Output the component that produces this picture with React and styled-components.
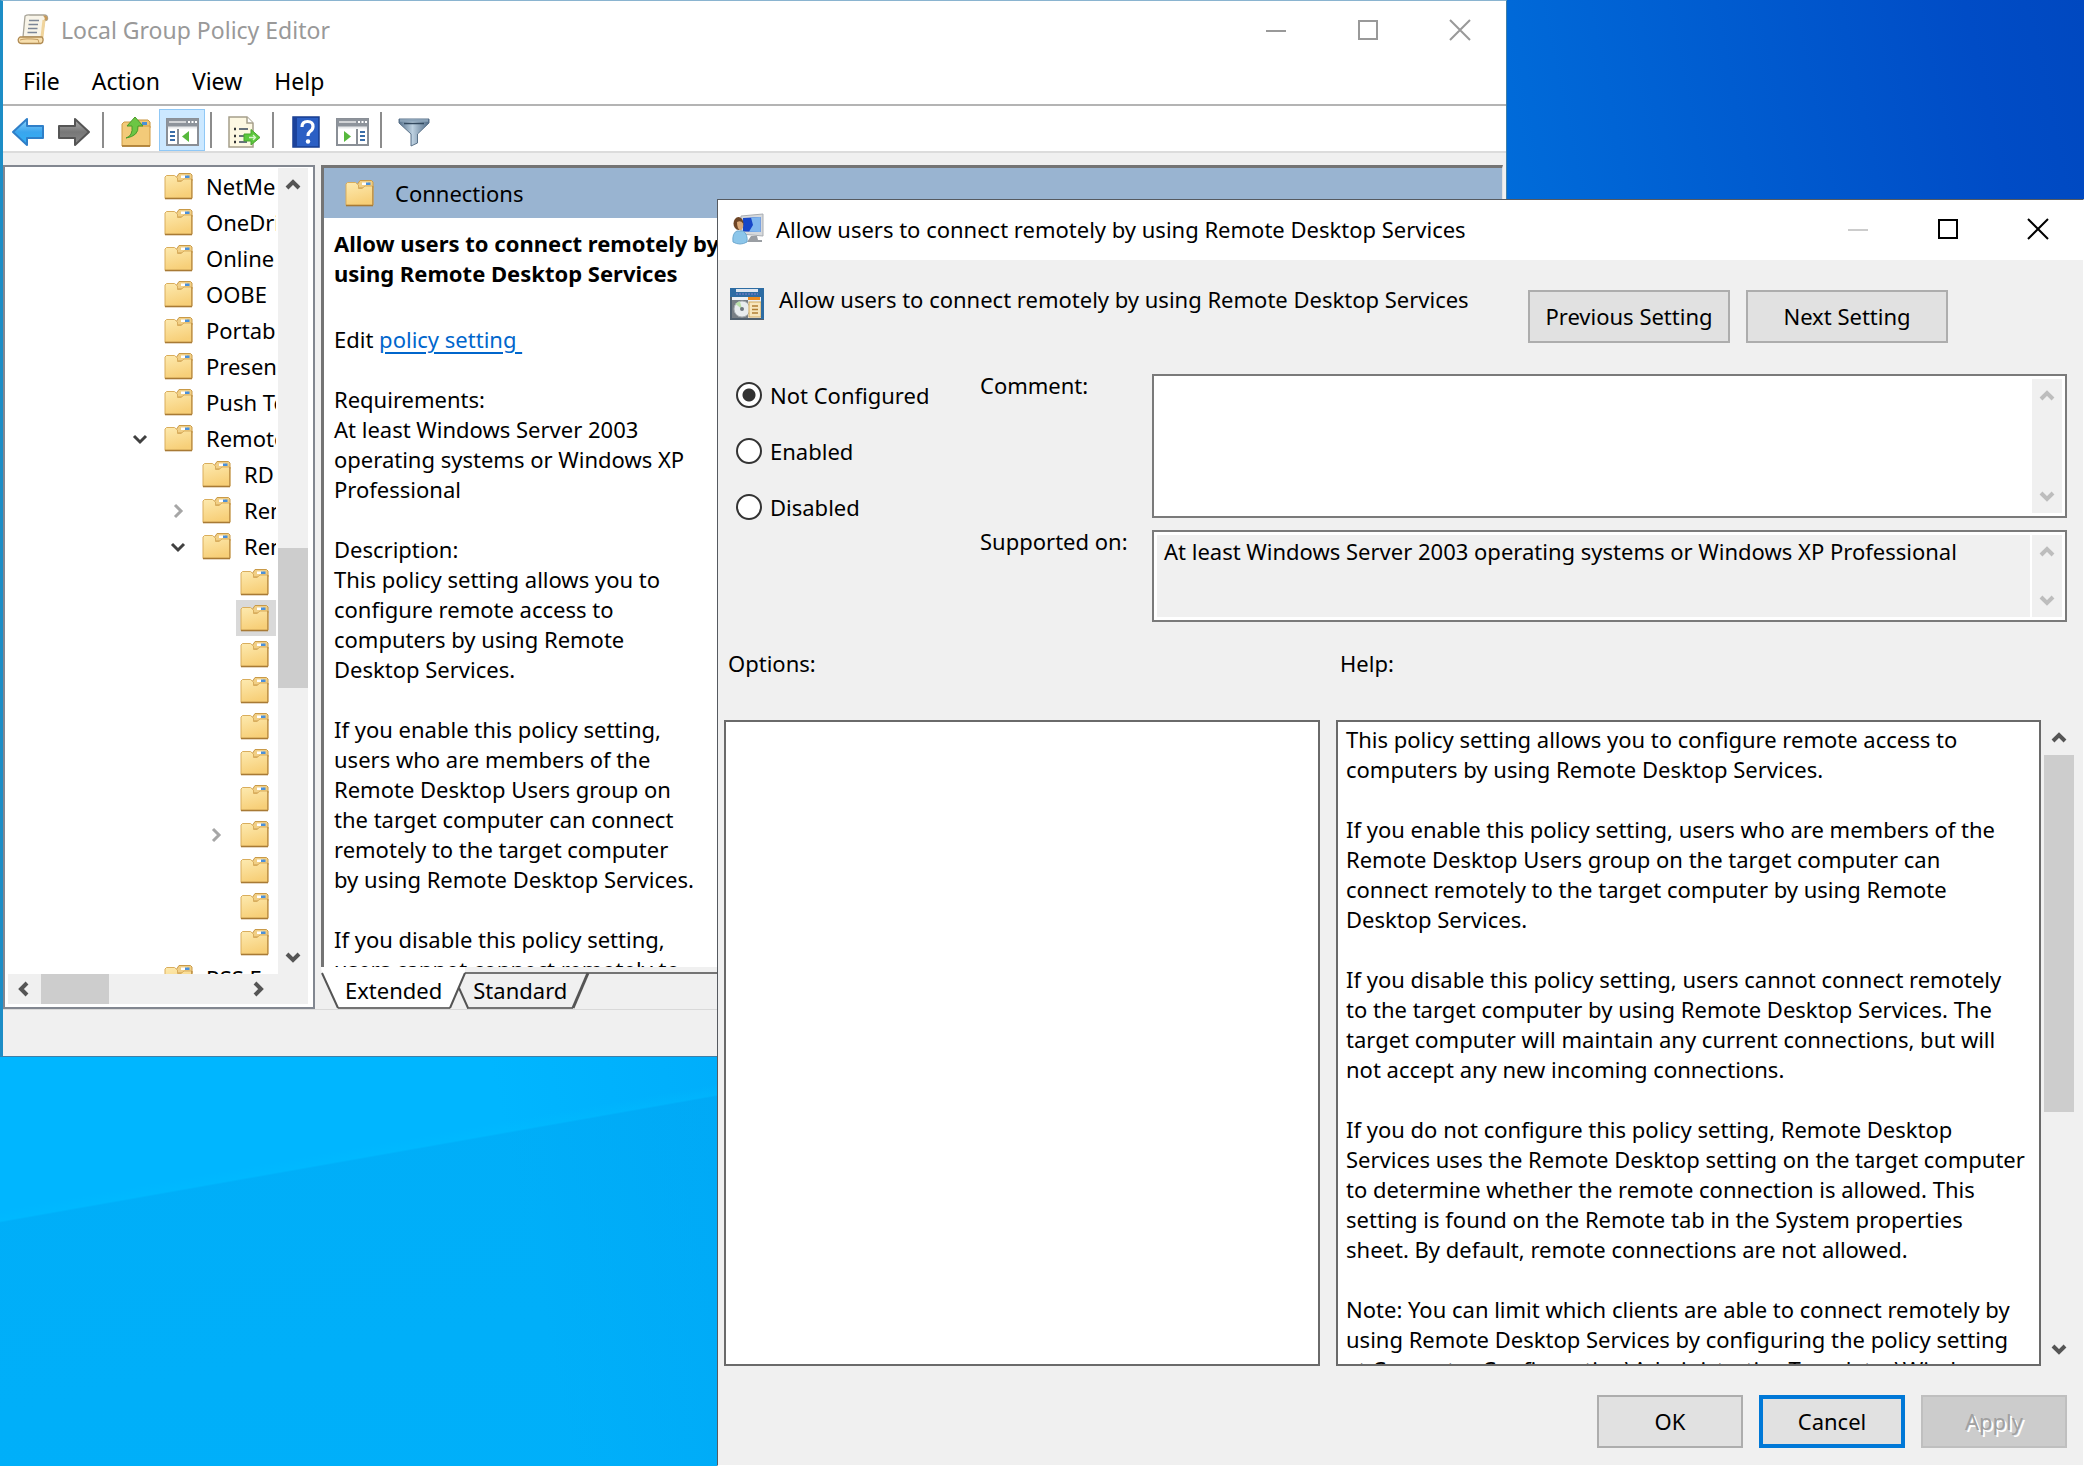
import React, { useState } from "react";
import styled, { createGlobalStyle, css } from "styled-components";

const GlobalStyle = createGlobalStyle`
  *, *::before, *::after { box-sizing: border-box; }
  html, body { margin: 0; height: 100%; }
  body, button, input, textarea {
    font-family: "Noto Sans", "Open Sans", "Liberation Sans", sans-serif;
    font-size: 22px;
    line-height: 30px;
    color: #000;
  }
  #root { height: 100%; }
`;

/* ---------- desktop and window frames ---------- */

const Desktop = styled.div`
  position: relative;
  height: 100vh;
  overflow: hidden;
  background:
    linear-gradient(170deg, transparent 66%, rgba(0, 190, 255, 0.35) 66.6%, rgba(0, 160, 236, 0.35) 66.7%, rgba(0, 160, 236, 0.25) 100%),
    linear-gradient(78deg, #00b6ff 0%, #00b6ff 24%, #00acfa 36%, #006cda 74%, #004cc6 95%, #0048c0 100%);
`;

const Console = styled.section`
  position: absolute;
  top: 0;
  left: 0;
  width: 1507px;
  height: 1057px;
  display: flex;
  flex-direction: column;
  background: #f0f0f0;
  border: 1px solid #3f7fa8;
  border-top-color: #8ab4d0;
  border-left: 3px solid #1c8dc6;
`;

const Dialog = styled.section`
  position: absolute;
  top: 199px;
  left: 717px;
  right: 0;
  bottom: 0;
  display: flex;
  flex-direction: column;
  background: #f0f0f0;
  border: 1px solid #565a60;
  border-right-color: #fff;
  border-bottom-color: #fff;
`;

const TitleBar = styled.header`
  display: flex;
  align-items: center;
  flex: none;
  height: 60px;
  padding: 0 0 2px 14px;
  gap: 12px;
  background: #fff;
  color: ${(p) => (p.$inactive ? "#999" : "#000")};

  h1 {
    flex: 1;
    margin: 0;
    font-size: ${(p) => (p.$inactive ? 23 : 22)}px;
    font-weight: 400;
    line-height: 30px;
  }
`;

const CaptionButtons = styled.div`
  display: flex;
  align-self: stretch;
`;

const CaptionButton = styled.button`
  display: grid;
  place-items: center;
  width: ${(p) => p.$width}px;
  padding: 0;
  border: 0;
  background: none;
  color: ${(p) => p.$tone};
`;

const MenuBar = styled.nav`
  display: flex;
  flex: none;
  height: 45px;
  padding: 0 4px;
  background: #fff;
  border-bottom: 2px solid #b4b4b4;
`;

const MenuItem = styled.button`
  height: 40px;
  padding: 0 16px;
  border: 0;
  background: none;
  font-size: 23px;
`;

const ToolBar = styled.div`
  display: flex;
  align-items: center;
  flex: none;
  height: 47px;
  padding: 3px 0 0 2px;
  background: #fff;
  border-bottom: 2px solid #dcdcdc;
`;

const ToolButton = styled.button`
  display: grid;
  place-items: center;
  width: 46px;
  height: 42px;
  padding: 3px 0 0;
  border: 1px solid ${(p) => (p.$on ? "#90c8f6" : "transparent")};
  background: ${(p) => (p.$on ? "#cce8ff" : "none")};
`;

const ToolDivider = styled.span`
  width: 2px;
  height: 36px;
  margin: 0 9px 0 5px;
  background: #8c8c8c;
`;

const ConsoleBody = styled.div`
  flex: 1;
  min-height: 0;
  display: grid;
  grid-template-columns: 312px 1fr;
  gap: 6px;
  padding: 12px 3px 0 0;
`;

const StatusBar = styled.footer`
  flex: none;
  height: 47px;
  border-top: 1px solid #d9d9d9;
`;

/* ---------- scroll bars ---------- */

const Rail = styled.div`
  display: flex;
  flex-direction: ${(p) => (p.$across ? "row" : "column")};
  flex: none;
  ${(p) => (p.$across ? "height: 30px;" : "width: 30px;")}
  background: #f0f0f0;
`;

const RailButton = styled.button`
  display: grid;
  place-items: center;
  flex: none;
  width: ${(p) => (p.$across ? "32px" : "100%")};
  height: ${(p) => (p.$across ? "100%" : "34px")};
  padding: 0;
  border: 0;
  background: none;
  color: ${(p) => (p.$off ? "#bdbdbd" : "#555")};
`;

const RailPart = styled.div`
  flex: ${(p) => p.$grow} 0 0;
  background: ${(p) => (p.$thumb ? "#cdcdcd" : "transparent")};
`;

const ARROWS = {
  up: "M3 12 L9 6 L15 12",
  down: "M3 6 L9 12 L15 6",
  left: "M12 3 L6 9 L12 15",
  right: "M6 3 L12 9 L6 15",
};

const Arrow = ({ to, width = 3 }) => (
  <svg width="18" height="18" viewBox="0 0 18 18" aria-hidden="true">
    <path d={ARROWS[to]} fill="none" stroke="currentColor" strokeWidth={width} />
  </svg>
);

function ScrollRail({ across, parts, label }) {
  const off = !parts;
  return (
    <Rail $across={across}>
      <RailButton $across={across} $off={off} disabled={off} aria-label={`${label}: back`}>
        <Arrow to={across ? "left" : "up"} width={4} />
      </RailButton>
      {parts ? (
        parts.map((grow, i) => <RailPart key={i} $grow={grow} $thumb={i === 1} />)
      ) : (
        <RailPart $grow={1} />
      )}
      <RailButton $across={across} $off={off} disabled={off} aria-label={`${label}: forward`}>
        <Arrow to={across ? "right" : "down"} width={4} />
      </RailButton>
    </Rail>
  );
}

/* ---------- tree ---------- */

const TreePane = styled.div`
  display: flex;
  flex-direction: column;
  min-height: 0;
  padding: 1px 5px 3px 3px;
  background: #fff;
  border: 2px solid #828790;
`;

const TreeTop = styled.div`
  display: flex;
  flex: 1;
  min-height: 0;
`;

const TreeBottom = styled.div`
  display: flex;
  flex: none;
  padding-right: 34px;
  background: #f0f0f0;

  > div {
    flex: 1;
  }
`;

const Tree = styled.ul`
  flex: 1;
  min-width: 0;
  margin: 0;
  padding: 0;
  overflow: hidden;
  list-style: none;
`;

const TreeRow = styled.li`
  display: flex;
  align-items: center;
  height: 36px;
  padding-left: ${(p) => 112 + p.$level * 38}px;
  white-space: nowrap;
`;

const Expander = styled.button`
  display: grid;
  place-items: center;
  flex: none;
  width: 40px;
  height: 36px;
  padding: 2px 0 0;
  border: 0;
  background: none;
  color: ${(p) => (p.$open ? "#404040" : "#a6a6a6")};
`;

const ExpanderGap = styled.span`
  flex: none;
  width: 40px;
`;

const TreeLabel = styled.span`
  display: flex;
  align-items: center;
  gap: 13px;
  flex: 1;
  height: 36px;
  padding-left: 4px;
  margin-right: 2px;
  overflow: hidden;
  background: ${(p) => (p.$selected ? "#d9d9d9" : "none")};

  svg {
    flex: none;
  }
`;

const ROWS = [
  [0, "NetMeeting"],
  [0, "OneDrive"],
  [0, "Online Assistance"],
  [0, "OOBE"],
  [0, "Portable Operating System"],
  [0, "Presentation Settings"],
  [0, "Push To Install"],
  [0, "Remote Desktop Services", "open"],
  [1, "RD Licensing"],
  [1, "Remote Desktop Connection Client", "closed"],
  [1, "Remote Desktop Session Host", "open"],
  [2, ""],
  [2, "", null, true],
  [2, ""],
  [2, ""],
  [2, ""],
  [2, ""],
  [2, ""],
  [2, "", "closed"],
  [2, ""],
  [2, ""],
  [2, ""],
  [0, "RSS Feeds"],
];

/* ---------- details pane ---------- */

const DetailsPane = styled.div`
  display: flex;
  flex-direction: column;
  min-width: 0;
  min-height: 0;
`;

const Sheet = styled.div`
  flex: 1;
  min-height: 0;
  overflow: hidden;
  background: #fff;
  border: 3px solid #747474;
  border-right: 1px solid #e3e3e3;
  border-bottom: 0;
`;

const Band = styled.div`
  display: flex;
  align-items: center;
  gap: 21px;
  height: 50px;
  padding: 0 21px;
  background: #99b4d1;
`;

const Article = styled.div`
  width: 400px;
  padding: 10px 0 0 10px;

  p,
  h2 {
    margin: 0 0 30px;
    white-space: pre;
  }

  h2 {
    margin-bottom: 36px;
    font-size: 22px;
    font-weight: 700;
    line-height: 30px;
  }

  a {
    color: #0066cc;
    text-underline-offset: 4px;
    text-decoration-thickness: 2px;
  }
`;

const TabStrip = styled.div`
  position: relative;
  flex: none;
  display: flex;
  height: 42px;
  padding: 0 0 4px 24px;
  gap: 31px;

  svg {
    position: absolute;
    inset: 0 auto auto 0;
  }

  &::after {
    content: "";
    flex: 1;
    border-top: 2px solid #747474;
    margin: 5px 1px 0 -17px;
  }
`;

const Tab = styled.button`
  position: relative;
  z-index: 1;
  padding: 8px 0 0;
  border: 0;
  background: none;
`;

/* ---------- dialog ---------- */

const DialogBody = styled.div`
  flex: 1;
  min-height: 0;
  display: flex;
  flex-direction: column;
  padding: 24px 16px 17px 6px;
`;

const Heading = styled.div`
  display: flex;
  align-items: flex-start;
  gap: 15px;
  padding-left: 6px;

  h2 {
    width: 734px;
    margin: 0;
    font-size: 22px;
    font-weight: 400;
    line-height: 30px;
  }

  svg {
    flex: none;
    margin-top: 4px;
  }
`;

const PushButton = styled.button`
  width: ${(p) => (p.$wide ? 202 : 146)}px;
  height: 53px;
  padding: 0 0 2px;
  border: 2px solid #adadad;
  background: #e1e1e1;

  ${(p) =>
    p.$focused &&
    css`
      border: 4px solid #0078d7;
    `}

  &:disabled {
    border-color: #bfbfbf;
    background: #cccccc;
    color: #a0a0a0;
    text-shadow: 2px 2px 0 #fff;
  }
`;

const NavButtons = styled.div`
  display: flex;
  gap: 16px;
  padding-top: 6px;
`;

const Settings = styled.div`
  display: grid;
  grid-template-columns: 244px 1fr;
  padding: 31px 0 0 12px;
`;

const Choices = styled.fieldset`
  display: flex;
  flex-direction: column;
  gap: 26px;
  margin: 0;
  padding: 6px 0 0;
  border: 0;
`;

const Choice = styled.label`
  display: flex;
  align-items: center;
  gap: 8px;

  input {
    appearance: none;
    width: 26px;
    height: 26px;
    margin: 0;
    border: 2px solid #333;
    border-radius: 50%;
    background: #fff;
  }

  input:checked {
    background: radial-gradient(circle, #333 0 6px, #fff 7px);
  }
`;

const FieldRows = styled.div`
  display: grid;
  grid-template-columns: 172px 1fr;
  row-gap: 12px;

  label {
    margin-top: -4px;
  }
`;

const Box = styled.div`
  display: flex;
  height: ${(p) => p.$height}px;
  padding: 3px;
  background: #fff;
  border: 2px solid #7a7a7a;

  textarea {
    flex: 1;
    min-width: 0;
    padding: 1px 7px;
    border: 0;
    outline: 0;
    resize: none;
    overflow: hidden;
    background: ${(p) => (p.$readOnly ? "#f0f0f0" : "#fff")};
    margin-right: ${(p) => (p.$readOnly ? 2 : 0)}px;
  }
`;

const Panes = styled.div`
  flex: 1;
  min-height: 0;
  display: grid;
  grid-template-columns: 596fr 738fr;
  grid-template-rows: 72px 1fr;
  column-gap: 16px;
  margin-right: -7px;
  padding-top: 26px;

  h3 {
    margin: 0;
    padding-left: 4px;
    font-size: 22px;
    font-weight: 400;
    line-height: 30px;
  }
`;

const PaneBox = styled.div`
  min-height: 0;
  overflow: hidden;
  background: #fff;
  border: 2px solid #6a6a6a;
`;

const HelpArea = styled.div`
  display: grid;
  grid-template-columns: 1fr 30px;
  column-gap: 3px;
  min-height: 0;
`;

const HelpText = styled.div`
  height: 100%;
  padding: 2px 0 0 8px;
  overflow: hidden;

  p {
    margin: 0 0 30px;
    white-space: pre;
  }
`;

const HelpRail = styled.div`
  display: flex;
  padding-top: 1px;
`;

const Actions = styled.div`
  display: flex;
  justify-content: flex-end;
  gap: 16px;
  padding-top: 29px;
`;

const HELP = [
  "This policy setting allows you to configure remote access to\ncomputers by using Remote Desktop Services.",
  "If you enable this policy setting, users who are members of the\nRemote Desktop Users group on the target computer can\nconnect remotely to the target computer by using Remote\nDesktop Services.",
  "If you disable this policy setting, users cannot connect remotely\nto the target computer by using Remote Desktop Services. The\ntarget computer will maintain any current connections, but will\nnot accept any new incoming connections.",
  "If you do not configure this policy setting, Remote Desktop\nServices uses the Remote Desktop setting on the target computer\nto determine whether the remote connection is allowed. This\nsetting is found on the Remote tab in the System properties\nsheet. By default, remote connections are not allowed.",
  "Note: You can limit which clients are able to connect remotely by\nusing Remote Desktop Services by configuring the policy setting\nat Computer Configuration\\Administrative Templates\\Windows",
];

/* ---------- icons ---------- */

const FolderIcon = () => (
  <svg width="29" height="28" viewBox="0 0 29 28" aria-hidden="true">
    <defs>
      <linearGradient id="folderFill" x1="0" y1="0" x2="0.3" y2="1">
        <stop offset="0" stopColor="#fdeab0" />
        <stop offset="1" stopColor="#f7cf78" />
      </linearGradient>
    </defs>
    <path d="M12 6 L15 1.5 H26.5 L28 3 V9 H12 Z" fill="#f1cf86" stroke="#c99a48" />
    <rect x="17" y="3.500" width="6" height="2.500" fill="#fff" />
    <rect x="21" y="3.500" width="4.500" height="2.500" fill="#4a90d9" />
    <path d="M1 26.5 V5 L2.5 3.5 H10.500 L13.5 6 V9.500 H17 L20 7 H28 V26.5 Z" fill="url(#folderFill)" stroke="#d9ad5c" />
    <path d="M1 26.5 H28" stroke="#a87a35" strokeWidth="1.6" />
    <path d="M27.8 7 V26" stroke="#b98c44" strokeWidth="1.2" />
  </svg>
);

const ScrollIcon = () => (
  <svg width="32" height="32" viewBox="0 0 32 32" aria-hidden="true">
    <path d="M8 2 Q10 0.5 13 1 H27 Q31 1 30.5 5 Q30 7 27.5 6.5 L25 23 H6 Z" fill="#f8f4e8" stroke="#a8a498" strokeWidth="1.3" />
    <path d="M26 1.5 Q31 1 30.5 5 Q30 7 27.5 6.5 Q28 3 26 1.5Z" fill="#c79a58" />
    <path d="M27 6 L24.5 27" stroke="#f0d49c" strokeWidth="3" />
    <path d="M3 23 Q0.5 24.5 1.5 27.5 Q2 29.5 5 29.5 H24 Q26.5 28.5 26 25 L25 23 Z" fill="#f7dfae" stroke="#b08a52" strokeWidth="1.3" />
    <path d="M3 26 Q8 24 21 25.5 L22 29" fill="none" stroke="#c39b5f" />
    <path d="M12 6.5 H22 M11.5 10.5 H21 M11 14.5 H20.5 M10.5 18.5 H20" stroke="#7c8696" strokeWidth="1.7" />
  </svg>
);

const BlockArrow = ({ back }) => (
  <svg width="34" height="32" viewBox="0 0 34 32" aria-hidden="true">
    <defs>
      <linearGradient id={back ? "arrBack" : "arrNext"} x1="0" y1="0" x2="0" y2="1">
        <stop offset="0" stopColor={back ? "#8ed4fb" : "#b0b0b0"} />
        <stop offset="0.5" stopColor={back ? "#3aa5ee" : "#777"} />
        <stop offset="1" stopColor={back ? "#2fb1f5" : "#8b8b8b"} />
      </linearGradient>
    </defs>
    <path
      d={back ? "M2 16 L16 3 V10 H32 V22 H16 V29 Z" : "M32 16 L18 3 V10 H2 V22 H18 V29 Z"}
      fill={`url(#${back ? "arrBack" : "arrNext"})`}
      stroke={back ? "#2f7fc8" : "#555"}
      strokeWidth="2"
      strokeLinejoin="round"
    />
  </svg>
);

const UpFolderIcon = () => (
  <svg width="30" height="32" viewBox="0 0 30 32" aria-hidden="true">
    <path d="M15 9 L17 4 H27 L29 6 V12 H14 Z" fill="#efc676" stroke="#c9953f" />
    <rect x="21" y="6" width="5" height="3" fill="#4a90d9" />
    <path d="M1 30 V8 L3 6 H11 L14 10 H29 V30 Z" fill="#f3ca79" stroke="#cf9b44" />
    <path d="M1 30 H29" stroke="#a97a30" strokeWidth="1.6" />
    <path d="M5 22 Q12 20 11 10 H6 L14 1 L22 10 H17 Q18 20 5 22 Z" fill="#6cc644" stroke="#4b9a2a" />
  </svg>
);

const PanelIcon = ({ flip }) => (
  <svg width="33" height="28" viewBox="0 0 33 28" aria-hidden="true">
    <rect x="1" y="1" width="31" height="26" fill="#fff" stroke="#8a8f96" strokeWidth="2" />
    <rect x="1" y="1" width="31" height="8" fill="#8d939b" />
    <path d="M3 4 H20" stroke="#fff" strokeWidth="1.2" />
    <path d="M22 4 H24 M25.5 4 H27.5 M29 4 H31" stroke="#fff" strokeWidth="2" />
    <path d="M2 9.5 H31" stroke="#e9eaec" strokeWidth="2" />
    {flip ? (
      <>
        <path d="M21 11 V27" stroke="#8a8f96" strokeWidth="2" />
        <path d="M24 14 H29 M24 18 H29 M24 22 H29" stroke="#3a6da8" strokeWidth="2" />
        <path d="M8 13 L15 18.5 L8 24 Z" fill="#56b83c" />
      </>
    ) : (
      <>
        <path d="M12 11 V27" stroke="#8a8f96" strokeWidth="2" />
        <path d="M4 14 H9 M4 18 H9 M4 22 H9" stroke="#3a6da8" strokeWidth="2" />
        <path d="M23 13 L16 18.5 L23 24 Z" fill="#56b83c" />
      </>
    )}
  </svg>
);

const ExportIcon = () => (
  <svg width="34" height="32" viewBox="0 0 34 32" aria-hidden="true">
    <path d="M2 1 H20 L26 7 V31 H2 Z" fill="#fdf8e2" stroke="#a59f8b" strokeWidth="1.5" />
    <path d="M20 1 V7 H26" fill="#fff" stroke="#a59f8b" strokeWidth="1.5" />
    <path d="M7 13 H9 M7 20 H9 M7 26 H9" stroke="#333" strokeWidth="2.4" />
    <path d="M12 13 H21 M12 20 H17 M12 26 H20" stroke="#68727c" strokeWidth="1.8" />
    <path d="M17 18 H24 V13.5 L33 21.5 L24 29 V25 H17 Z" fill="#5cc83e" stroke="#49a52e" />
    <path d="M22 21.5 H28 M26 19 L28.5 21.5 L26 24" fill="none" stroke="#d7f5cb" strokeWidth="1.3" />
  </svg>
);

const HelpIcon = () => (
  <svg width="28" height="32" viewBox="0 0 28 32" aria-hidden="true">
    <rect x="1" y="1" width="26" height="30" fill="#2b5fc4" stroke="#173d8f" strokeWidth="1.5" />
    <path d="M1 1 H5 V31 H1 Z" fill="#1b429b" />
    <path d="M10 11 Q10 5.5 15.5 5.5 Q21 5.5 21 10.5 Q21 13.5 18 15.5 Q16 17 16 20" fill="none" stroke="#fff" strokeWidth="3.2" />
    <circle cx="16" cy="25.5" r="2.2" fill="#fff" />
  </svg>
);

const FunnelIcon = () => (
  <svg width="32" height="30" viewBox="0 0 32 30" aria-hidden="true">
    <defs>
      <linearGradient id="funnel" x1="0" y1="0" x2="1" y2="0">
        <stop offset="0" stopColor="#56718c" />
        <stop offset="0.45" stopColor="#bcd0e0" />
        <stop offset="1" stopColor="#4f6a85" />
      </linearGradient>
    </defs>
    <path d="M1 2 H31 V6 L19.5 17 V26 L13 29 V17 L1 6 Z" fill="url(#funnel)" stroke="#5b738a" />
    <path d="M2 3.5 H30" stroke="#8ba3b8" strokeWidth="2.5" />
    <path d="M6 6.5 H26" stroke="#33495e" strokeWidth="1.5" />
  </svg>
);

const RemoteUserIcon = () => (
  <svg width="32" height="32" viewBox="0 0 32 32" aria-hidden="true">
    <path d="M9 3 L31 1 V23 L9 21 Z" fill="#d6d9dc" stroke="#a9adb2" />
    <path d="M11 5 L28.5 4 V19 L11 18.5 Z" fill="#1746c8" />
    <path d="M19 4.500 L28.5 4 V19 L17 18.700 L21 12 Z" fill="#7fb6ee" />
    <path d="M19 23 H25 L26 27 H30 V29 H15 Z" fill="#9a9ea3" />
    <ellipse cx="6.5" cy="10.500" rx="5" ry="6.500" fill="#6d4526" />
    <path d="M5 9 Q9 7 11 10.5 Q12 15 8.500 17.5 Q5 16 5 9Z" fill="#d9a878" />
    <path d="M1 29 Q0 20 5 18 L11 18 Q16 21 15 29 Q8 33 1 29 Z" fill="#8cc6ea" stroke="#6fa9d0" />
  </svg>
);

const PolicyIcon = () => (
  <svg width="34" height="32" viewBox="0 0 34 32" aria-hidden="true">
    <rect x="1" y="1" width="32" height="30" fill="#eceff3" stroke="#51606e" strokeWidth="2" />
    <rect x="0" y="0" width="34" height="9" fill="#2d6ca3" />
    <path d="M6 2.5 H28" stroke="#dfe6ee" strokeWidth="3" />
    <path d="M6 6 H28" stroke="#6a78c0" strokeWidth="1.5" strokeDasharray="2 1" />
    <rect x="18" y="9" width="12" height="3" fill="#e98a1e" />
    <rect x="2" y="12" width="16" height="18" fill="#777e84" />
    <circle cx="12" cy="21" r="8" fill="#e8ecee" stroke="#a8aeb2" />
    <path d="M12 21 L5.5 16 A8 8 0 0 1 10 13.5 Z" fill="#b9e0a8" />
    <circle cx="12" cy="21" r="2" fill="#6d767c" />
    <rect x="19" y="14" width="12" height="15" fill="#f7e6bd" stroke="#d2a95c" />
    <path d="M22 18 H28 M22 21.5 H28 M22 25 H28" stroke="#b17f35" strokeWidth="1.5" />
    <rect x="31" y="9" width="3" height="22" fill="#2d6ca3" />
  </svg>
);

const GLYPHS = {
  Minimize: "M1 12 H21",
  Maximize: "M2 2 H20 V20 H2 Z",
  Close: "M1 1 L21 21 M21 1 L1 21",
};

function WindowControls({ tones, width }) {
  return (
    <CaptionButtons>
      {Object.entries(GLYPHS).map(([name, d], i) => (
        <CaptionButton key={name} $tone={tones[i]} $width={width} aria-label={name}>
          <svg width="22" height="22" viewBox="0 0 22 22" aria-hidden="true">
            <path d={d} fill="none" stroke="currentColor" strokeWidth="2" />
          </svg>
        </CaptionButton>
      ))}
    </CaptionButtons>
  );
}

/* ---------- windows ---------- */

function PolicyConsole() {
  return (
    <Console aria-label="Local Group Policy Editor">
      <TitleBar $inactive>
        <ScrollIcon />
        <h1>Local Group Policy Editor</h1>
        <WindowControls tones={["#999", "#999", "#999"]} width={92} />
      </TitleBar>
      <MenuBar>
        {["File", "Action", "View", "Help"].map((name) => (
          <MenuItem key={name}>{name}</MenuItem>
        ))}
      </MenuBar>
      <ToolBar>
        <ToolButton aria-label="Back"><BlockArrow back /></ToolButton>
        <ToolButton aria-label="Forward"><BlockArrow /></ToolButton>
        <ToolDivider />
        <ToolButton aria-label="Up one level"><UpFolderIcon /></ToolButton>
        <ToolButton $on aria-label="Show or hide console tree"><PanelIcon /></ToolButton>
        <ToolDivider />
        <ToolButton aria-label="Export list"><ExportIcon /></ToolButton>
        <ToolDivider />
        <ToolButton aria-label="Help"><HelpIcon /></ToolButton>
        <ToolButton aria-label="Show or hide action pane"><PanelIcon flip /></ToolButton>
        <ToolDivider />
        <ToolButton aria-label="Filter"><FunnelIcon /></ToolButton>
      </ToolBar>
      <ConsoleBody>
        <TreePane>
          <TreeTop>
            <Tree>
              {ROWS.map(([level, name, state, selected], i) => (
                <TreeRow key={i} $level={level}>
                  {state ? (
                    <Expander $open={state === "open"} aria-label="Toggle folder">
                      <Arrow to={state === "open" ? "down" : "right"} />
                    </Expander>
                  ) : (
                    <ExpanderGap />
                  )}
                  <TreeLabel $selected={selected}>
                    <FolderIcon />
                    {name}
                  </TreeLabel>
                </TreeRow>
              ))}
            </Tree>
            <ScrollRail label="Tree" parts={[346, 140, 252]} />
          </TreeTop>
          <TreeBottom>
            <ScrollRail across label="Tree sideways" parts={[1, 70, 137]} />
          </TreeBottom>
        </TreePane>
        <DetailsPane>
          <Sheet>
            <Band><FolderIcon />Connections</Band>
            <Article>
              <h2>{"Allow users to connect remotely by\nusing Remote Desktop Services"}</h2>
              <p>Edit <a href="#policy">{"policy setting "}</a></p>
              <p>{"Requirements:\nAt least Windows Server 2003\noperating systems or Windows XP\nProfessional"}</p>
              <p>{"Description:\nThis policy setting allows you to\nconfigure remote access to\ncomputers by using Remote\nDesktop Services."}</p>
              <p>{"If you enable this policy setting,\nusers who are members of the\nRemote Desktop Users group on\nthe target computer can connect\nremotely to the target computer\nby using Remote Desktop Services."}</p>
              <p>{"If you disable this policy setting,\nusers cannot connect remotely to"}</p>
            </Article>
          </Sheet>
          <TabStrip>
            <svg width="270" height="42" viewBox="0 0 270 42" aria-hidden="true">
              <path d="M0 0 H144 V6 L129 41 H17 L1 6 Z" fill="#fff" />
              <path d="M144 6 H267 M17 41 H129 M146 41 H252" stroke="#747474" strokeWidth="2" />
              <path d="M1 6 L17 41 M144 6 L129 41 M138 21 L147 41" fill="none" stroke="#555" strokeWidth="2" />
              <path d="M267 6 L252 41" stroke="#555" strokeWidth="3" />
            </svg>
            <Tab>Extended</Tab>
            <Tab>Standard</Tab>
          </TabStrip>
        </DetailsPane>
      </ConsoleBody>
      <StatusBar />
    </Console>
  );
}

function PolicyDialog() {
  const [choice, setChoice] = useState("Not Configured");
  const title = "Allow users to connect remotely by using Remote Desktop Services";
  return (
    <Dialog role="dialog" aria-label={title}>
      <TitleBar>
        <RemoteUserIcon />
        <h1>{title}</h1>
        <WindowControls tones={["#ccc", "#000", "#000"]} width={90} />
      </TitleBar>
      <DialogBody>
        <Heading>
          <PolicyIcon />
          <h2>{title}</h2>
          <NavButtons>
            <PushButton $wide>Previous Setting</PushButton>
            <PushButton $wide>Next Setting</PushButton>
          </NavButtons>
        </Heading>
        <Settings>
          <Choices>
            {["Not Configured", "Enabled", "Disabled"].map((name) => (
              <Choice key={name}>
                <input type="radio" name="state" checked={choice === name} onChange={() => setChoice(name)} />
                {name}
              </Choice>
            ))}
          </Choices>
          <FieldRows>
            <label htmlFor="comment">Comment:</label>
            <Box $height={144}>
              <textarea id="comment" />
              <ScrollRail label="Comment" />
            </Box>
            <label htmlFor="supported">Supported on:</label>
            <Box $height={92} $readOnly>
              <textarea
                id="supported"
                readOnly
                value="At least Windows Server 2003 operating systems or Windows XP Professional"
              />
              <ScrollRail label="Supported on" />
            </Box>
          </FieldRows>
        </Settings>
        <Panes>
          <h3>Options:</h3>
          <h3>Help:</h3>
          <PaneBox />
          <HelpArea>
            <PaneBox>
              <HelpText>
                {HELP.map((text) => (
                  <p key={text}>{text}</p>
                ))}
              </HelpText>
            </PaneBox>
            <HelpRail>
              <ScrollRail label="Help" parts={[0, 358, 220]} />
            </HelpRail>
          </HelpArea>
        </Panes>
        <Actions>
          <PushButton>OK</PushButton>
          <PushButton $focused>Cancel</PushButton>
          <PushButton disabled>Apply</PushButton>
        </Actions>
      </DialogBody>
    </Dialog>
  );
}

export default function App() {
  return (
    <>
      <GlobalStyle />
      <Desktop>
        <PolicyConsole />
        <PolicyDialog />
      </Desktop>
    </>
  );
}
